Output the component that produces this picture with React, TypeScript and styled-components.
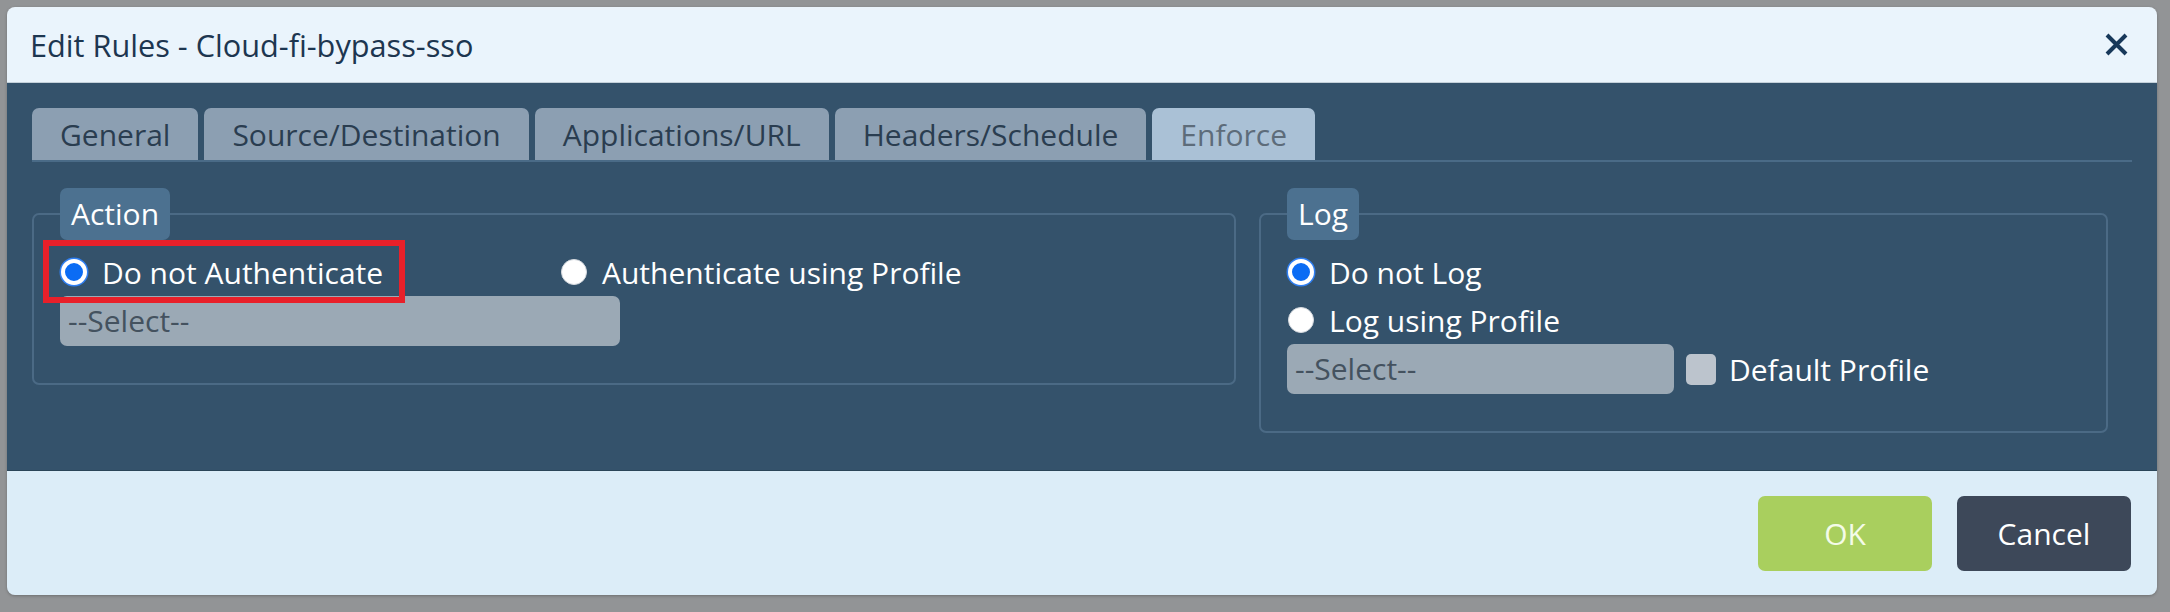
import styled, { createGlobalStyle } from "styled-components";

const GlobalStyle = createGlobalStyle`
  body {
    margin: 0;
    background: #929496;
    font-family: "Open Sans", "Noto Sans", sans-serif;
  }
`;

const Page = styled.div`
  width: 2170px;
  height: 612px;
  padding: 7px 13px 0 7px;
  box-sizing: border-box;
`;

const Dialog = styled.div`
  width: 2150px;
  border-radius: 8px;
  overflow: hidden;
  box-shadow: 0 1px 3px rgba(0, 0, 0, 0.25);
`;

const Header = styled.div`
  height: 76px;
  box-sizing: border-box;
  padding: 0 29px 0 23px;
  display: flex;
  align-items: center;
  justify-content: space-between;
  background: #eaf4fc;
  border-bottom: 1px solid #c3d0da;
`;

const Title = styled.div`
  font-size: 30.7px;
  color: #1d3650;
`;

const CloseButton = styled.button`
  border: 0;
  padding: 0;
  background: none;
  display: flex;
  cursor: pointer;
`;

const Body = styled.div`
  background: #34526b;
  padding: 25px 25px 37px 25px;
  border-bottom: 1px solid #2b4558;
`;

const TabBar = styled.div`
  display: flex;
  gap: 6px;
  border-bottom: 2px solid #4a6b87;
`;

const Tab = styled.div<{ $active?: boolean }>`
  height: 52px;
  line-height: 54px;
  padding: 0 28px;
  font-size: 30px;
  border-radius: 7px 7px 0 0;
  background: ${(p) => (p.$active ? "#aac1d6" : "#8c9fb2")};
  color: ${(p) => (p.$active ? "#5d6c7a" : "#2a3d50")};
`;

const Sections = styled.div`
  margin-top: 26px;
  display: grid;
  grid-template-columns: 1204px 849px;
  gap: 23px;
  align-items: start;
`;

const Group = styled.fieldset`
  margin: 0;
  min-width: 0;
  border: 2px solid #4b6a85;
  border-radius: 7px;
  padding: 0 26px 37px 26px;
`;

const Legend = styled.legend`
  height: 52px;
  line-height: 52px;
  padding: 0 11px;
  border-radius: 7px;
  background: #4c7190;
  color: #fff;
  font-size: 30px;
`;

const OptionGrid = styled.div`
  margin-top: 8px;
  display: grid;
  grid-template-columns: 500px auto;
`;

const OptionList = styled.div`
  margin-top: 8px;
  display: flex;
  flex-direction: column;
`;

const Option = styled.label<{ $marked?: boolean }>`
  position: relative;
  justify-self: start;
  align-self: start;
  display: inline-flex;
  align-items: center;
  height: 48px;
  font-size: 30px;
  color: #fff;
  cursor: pointer;

  ${(p) =>
    p.$marked &&
    `
    &::after {
      content: "";
      position: absolute;
      top: -8px;
      bottom: -7px;
      left: -17px;
      right: -22px;
      border: 6px solid #e8202a;
      pointer-events: none;
    }
  `}
`;

const Radio = styled.span<{ $checked?: boolean }>`
  width: 26px;
  height: 26px;
  box-sizing: border-box;
  border-radius: 50%;
  margin: 0 15px 0 1px;
  flex-shrink: 0;
  background: ${(p) => (p.$checked ? "#0b6cf4" : "#ffffff")};
  border: ${(p) => (p.$checked ? "4px solid #ffffff" : "1px solid #d7dbe0")};
  box-shadow: ${(p) => (p.$checked ? "0 0 0 1.5px #2f7ff2" : "none")};
`;

const Select = styled.div<{ $width: number }>`
  width: ${(p) => p.$width}px;
  height: 50px;
  box-sizing: border-box;
  padding: 0 8px;
  border-radius: 7px;
  background: #9ba9b5;
  color: #44525f;
  font-size: 30px;
  line-height: 50px;
`;

const SelectLine = styled.div`
  display: flex;
  align-items: center;
`;

const Checkbox = styled.span`
  width: 30px;
  height: 31px;
  margin: 0 13px 0 12px;
  border-radius: 5px;
  background: #bcc4cd;
`;

const CheckLabel = styled.span`
  font-size: 30px;
  color: #fff;
`;

const Footer = styled.div`
  height: 124px;
  box-sizing: border-box;
  padding: 25px 26px 0 0;
  display: flex;
  justify-content: flex-end;
  align-items: flex-start;
  gap: 25px;
  background: #dcedf8;
`;

const Button = styled.button<{ $primary?: boolean }>`
  width: 174px;
  height: 75px;
  border: 0;
  border-radius: 7px;
  font-family: "Open Sans", "Noto Sans", sans-serif;
  font-size: 30px;
  cursor: pointer;
  background: ${(p) => (p.$primary ? "#a9cf5e" : "#3d4859")};
  color: ${(p) => (p.$primary ? "#f4fbe8" : "#ffffff")};
`;

const tabs = [
  "General",
  "Source/Destination",
  "Applications/URL",
  "Headers/Schedule",
  "Enforce",
];

export default function App() {
  return (
    <>
      <GlobalStyle />
      <Page>
        <Dialog>
          <Header>
            <Title>Edit Rules - Cloud-fi-bypass-sso</Title>
            <CloseButton aria-label="Close">
              <svg width="23" height="23" viewBox="0 0 23 23">
                <path
                  d="M2 2 L21 21 M21 2 L2 21"
                  stroke="#17385a"
                  strokeWidth="4"
                  fill="none"
                />
              </svg>
            </CloseButton>
          </Header>
          <Body>
            <TabBar>
              {tabs.map((t) => (
                <Tab key={t} $active={t === "Enforce"}>
                  {t}
                </Tab>
              ))}
            </TabBar>
            <Sections>
              <Group>
                <Legend>Action</Legend>
                <OptionGrid>
                  <Option $marked>
                    <Radio $checked />
                    Do not Authenticate
                  </Option>
                  <Option>
                    <Radio />
                    Authenticate using Profile
                  </Option>
                </OptionGrid>
                <Select $width={560}>--Select--</Select>
              </Group>
              <Group>
                <Legend>Log</Legend>
                <OptionList>
                  <Option>
                    <Radio $checked />
                    Do not Log
                  </Option>
                  <Option>
                    <Radio />
                    Log using Profile
                  </Option>
                </OptionList>
                <SelectLine>
                  <Select $width={387}>--Select--</Select>
                  <Checkbox />
                  <CheckLabel>Default Profile</CheckLabel>
                </SelectLine>
              </Group>
            </Sections>
          </Body>
          <Footer>
            <Button $primary>OK</Button>
            <Button>Cancel</Button>
          </Footer>
        </Dialog>
      </Page>
    </>
  );
}
